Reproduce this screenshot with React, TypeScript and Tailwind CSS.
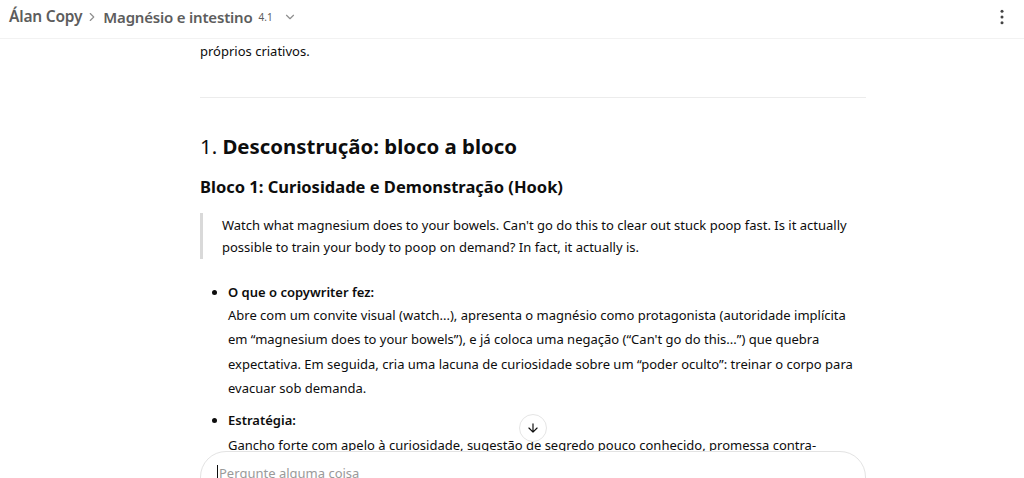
import React from "react";

export default function App() {
  const font = { fontFamily: '"Noto Sans", "Open Sans", sans-serif' };
  return (
    <div className="relative w-[1024px] h-[478px] overflow-hidden bg-white text-[#0d0d0d]" style={font}>
      <header className="h-[39px] flex items-center justify-between border-b border-[#f2f2f2] pl-[9px] pr-[12px] pb-[4px]">
        <div className="flex items-center text-[#5d5d5d]">
          <span className="text-[15.5px] font-semibold tracking-[-0.2px]">Álan Copy</span>
          <svg width="14" height="14" viewBox="0 0 24 24" fill="none" stroke="#8f8f8f" strokeWidth="2" strokeLinecap="round" strokeLinejoin="round" className="ml-[3px] mr-[4px]"><path d="M9 6l6 6-6 6" /></svg>
          <span className="text-[15px] font-semibold tracking-[-0.2px]">Magnésio e intestino</span>
          <span className="text-[10px] ml-[6px] text-[#5d5d5d]">4.1</span>
          <svg width="14" height="14" viewBox="0 0 24 24" fill="none" stroke="#8f8f8f" strokeWidth="2" strokeLinecap="round" strokeLinejoin="round" className="ml-[10px]"><path d="M6 9l6 6 6-6" /></svg>
        </div>
        <svg width="20" height="20" viewBox="0 0 24 24" fill="#444"><circle cx="12" cy="5" r="1.8" /><circle cx="12" cy="12" r="1.8" /><circle cx="12" cy="19" r="1.8" /></svg>
      </header>

      <main className="w-[666px] ml-[200px] text-[13px] leading-[24.5px]">
        <p>próprios criativos.</p>
        <hr className="mt-[33px] border-t border-[#ececec]" />
        <h2 className="mt-[34px] text-[20.4px] leading-[28px]"><span className="font-normal">1. </span><span className="font-bold">Desconstrução: bloco a bloco</span></h2>
        <h3 className="mt-[15px] text-[16.5px] leading-[24px] font-bold">Bloco 1: Curiosidade e Demonstração (Hook)</h3>
        <blockquote className="mt-[14px] border-l-[3px] border-[#d9d9d9] pl-[19px] leading-[22px] py-[1px]">
          Watch what magnesium does to your bowels. Can't go do this to clear out stuck poop fast. Is it actually possible to train your body to poop on demand? In fact, it actually is.
        </blockquote>
        <ul className="mt-[21px] pl-[28px] list-disc marker:text-[#0d0d0d]">
          <li>
            <div className="font-semibold leading-[22px]">O que o copywriter fez:</div>
            <div>Abre com um convite visual (watch...), apresenta o magnésio como protagonista (autoridade implícita em “magnesium does to your bowels”), e já coloca uma negação (“Can't go do this...”) que quebra expectativa. Em seguida, cria uma lacuna de curiosidade sobre um “poder oculto”: treinar o corpo para evacuar sob demanda.</div>
          </li>
          <li className="mt-[7px]">
            <div className="font-semibold leading-[22px]">Estratégia:</div>
            <div className="mt-[2px]">Gancho forte com apelo à curiosidade, sugestão de segredo pouco conhecido, promessa contra-<br />intuitiva e rápida.</div>
          </li>
        </ul>
      </main>

      <button className="absolute left-[519px] top-[414px] w-[28px] h-[28px] rounded-full bg-white border border-[#e5e5e5] flex items-center justify-center">
        <svg width="14" height="14" viewBox="0 0 24 24" fill="none" stroke="#0d0d0d" strokeWidth="2" strokeLinecap="round" strokeLinejoin="round"><path d="M12 5v14M19 12l-7 7-7-7" /></svg>
      </button>

      <div className="absolute left-[200px] top-[451px] w-[666px] h-[80px] rounded-[26px] bg-white border border-[#e3e3e3] pl-[16px] pt-[12px]">
        <div className="flex items-center text-[13px] text-[#9a9a9a]">
          <span className="w-[1px] h-[17px] bg-[#0d0d0d] mr-[1px]" />
          Pergunte alguma coisa
        </div>
      </div>
    </div>
  );
}
